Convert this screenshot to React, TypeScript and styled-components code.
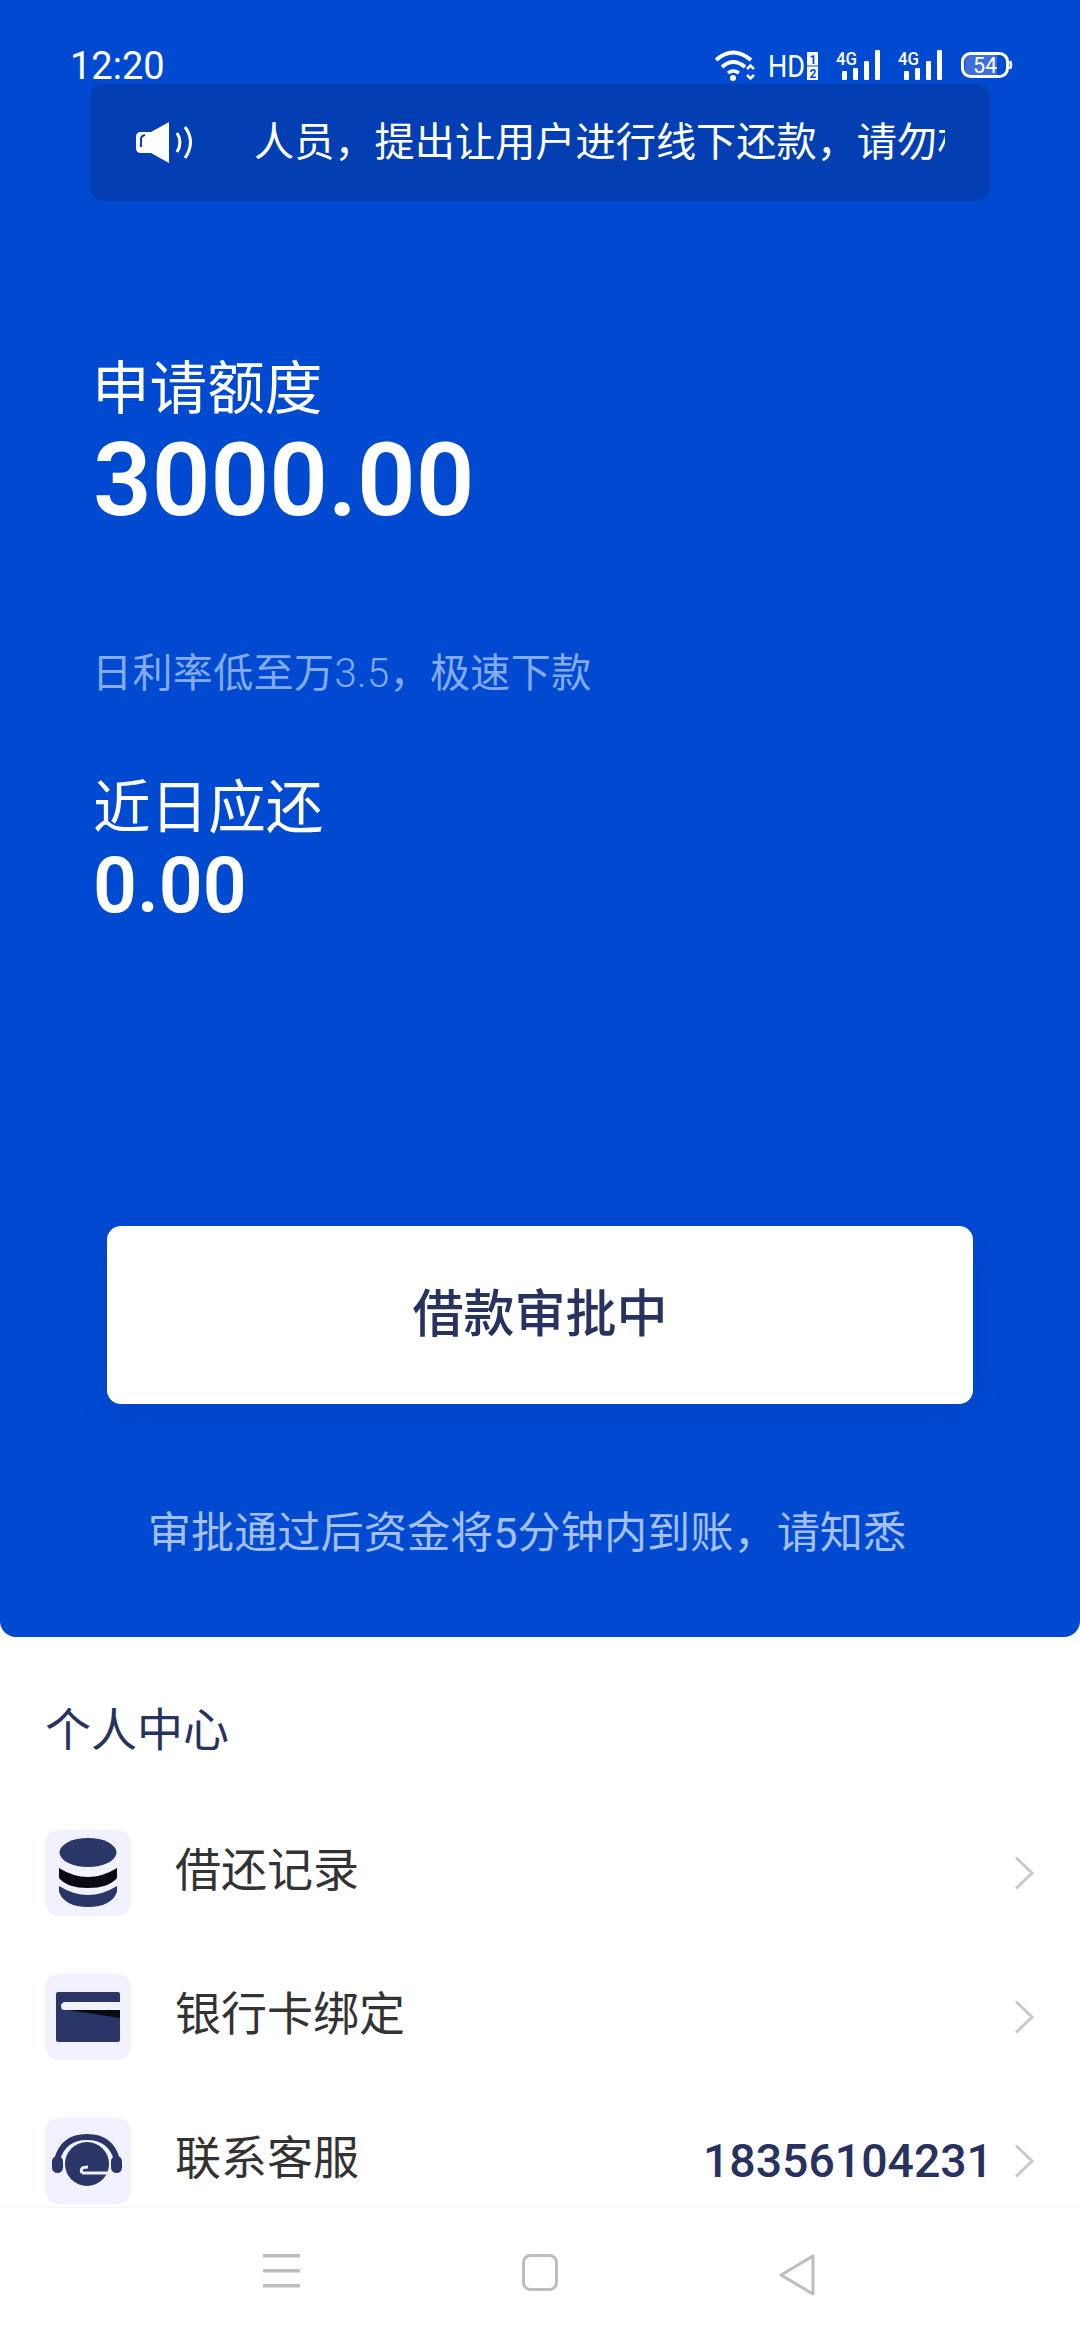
import React from "react";
import styled, { createGlobalStyle } from "styled-components";

const Global = createGlobalStyle`
  html, body { margin: 0; padding: 0; background: #fff; }
  * { box-sizing: border-box; }
  body { font-family: Roboto, "Noto Sans CJK SC", sans-serif; }
`;
const CJK = `Roboto, "Noto Sans CJK SC", sans-serif`;
const NAVY = "#28325f";

const Page = styled.div`
  width: 1080px; height: 2340px; display: flex; flex-direction: column;
  background: #fff; overflow: hidden; font-family: ${CJK};
`;
const Hero = styled.section`
  height: 1637px; flex: none; background: #004ad2; color: #fff;
  border-radius: 0 0 16px 16px; display: flex; flex-direction: column;
`;
const StatusBar = styled.div`
  height: 84px; flex: none; padding: 48px 65px 0 70px; display: flex;
  justify-content: space-between; align-items: center;
`;
const Clock = styled.span`font-size: 38px; line-height: 36px; font-weight: 400;`;
const StatusIcons = styled.svg`display: block;`;
const Notice = styled.div`
  flex: none; height: 117px; margin: 0 90px; padding: 0 45px 0 46px; border-radius: 14px;
  background: #033fb2; display: flex; align-items: center; gap: 58px;
`;
const Marquee = styled.div`
  width: 691px; overflow: hidden; white-space: nowrap; font-size: 40.2px; line-height: 56px;
`;
const Amounts = styled.div`padding: 155px 0 0 93px; display: flex; flex-direction: column;`;
const Label = styled.div`font-size: 57.6px; line-height: 68px; margin-left: -1px;`;
const BigValue = styled.div`font-size: 102.8px; line-height: 112px; font-weight: 600;`;
const Hint = styled.div`
  font-size: 40px; line-height: 56px; color: #84aaf0; margin: 110px 0 0 -1px;
  letter-spacing: 0.4px;
`;
const HintNumber = styled.span`font-weight: 300;`;
const SecondLabel = styled(Label)`margin: 73px 0 0 0;`;
const SmallValue = styled.div`font-size: 77px; line-height: 84px; font-weight: 600; margin-top: 1px;`;
const ActionButton = styled.button`
  flex: none; width: 866px; height: 178px; margin: 298px 0 0 107px; border: 0; border-radius: 14px;
  background: #fff; color: ${NAVY}; font: 500 51px/60px ${CJK};
  box-shadow: 0 12px 40px rgba(3, 50, 160, 0.2);
`;
const Footnote = styled.div`
  margin-top: 100px; padding-right: 26px; text-align: center; font-size: 43.2px; line-height: 60px; color: #a3bff5;
`;
const Center = styled.section`flex: 1; padding: 62px 0 0 45px; display: flex; flex-direction: column;`;
const CenterTitle = styled.h2`
  margin: 0 0 69px; font-size: 46px; line-height: 62px; font-weight: 400; color: ${NAVY};
`;
const Rows = styled.div`display: flex; flex-direction: column; gap: 58px; padding-right: 46px;`;
const Row = styled.div`height: 86px; display: flex; align-items: center;`;
const Tile = styled.div`
  width: 86px; height: 86px; border-radius: 14px; background: #f1f2fd; flex: none;
  display: flex; align-items: center; justify-content: center;
`;
const RowLabel = styled.div`
  margin: -6px 0 0 44px; flex: 1; font-size: 46px; line-height: 60px; color: #333;
`;
const Phone = styled.div`font-size: 46.4px; line-height: 60px; font-weight: 500; color: ${NAVY}; margin-right: 21px;`;
const Divider = styled.div`height: 1px; background: #f7f7f7; flex: none;`;
const NavBar = styled.nav`
  height: 132px; flex: none; display: flex; justify-content: center; align-items: flex-start;
  padding-top: 46px; gap: 221px;
`;

const Speaker = () => (
  <svg width="60" height="42" viewBox="0 0 60 42" fill="none">
    <path d="M5 10 H15 L33 0 V41 L15 31 H5 Q0 31 0 26 V15 Q0 10 5 10Z" fill="#fff" />
    <path d="M5 25 V17 Q5 14 9 13" stroke="#033fb2" strokeWidth="2" />
    <path d="M41 11 Q47 20 41 30" stroke="#fff" strokeWidth="3" />
    <path d="M49 5 Q60 20 49 36" stroke="#fff" strokeWidth="3" />
  </svg>
);

const Signal = ({ x }: { x: number }) => (
  <g transform={`translate(${x} 0)`}>
    <text x="0" y="16" fontSize="18" fontWeight="500" fill="#fff" fontFamily="Roboto, sans-serif" textLength="21" lengthAdjust="spacingAndGlyphs">4G</text>
    <rect x="6" y="22" width="5" height="9" rx="1" fill="#fff" />
    <rect x="17" y="19" width="5" height="12" rx="1" fill="#fff" />
    <rect x="28" y="12" width="5" height="19" rx="1" fill="#fff" />
    <rect x="39" y="1" width="5" height="30" rx="1" fill="#fff" />
  </g>
);

const StatusGlyphs = () => (
  <StatusIcons width="300" height="34" viewBox="0 0 300 34" fill="none">
    <path d="M1 11 Q18 -4 36 11" stroke="#fff" strokeWidth="4" />
    <path d="M7 18 Q18 8 30 18" stroke="#fff" strokeWidth="4" />
    <path d="M13 24 Q18 20 24 24" stroke="#fff" strokeWidth="3.5" />
    <circle cx="18" cy="29" r="3" fill="#fff" />
    <path d="M32 20 L35.5 16.5 L39 20 M32 26 L35.5 29.5 L39 26" stroke="#fff" strokeWidth="2.5" />
    <text x="53" y="28" fontSize="32" fontWeight="400" fill="#fff" fontFamily="Roboto, sans-serif" textLength="37" lengthAdjust="spacingAndGlyphs">HD</text>
    <rect x="92" y="3" width="11" height="13.5" fill="#fff" />
    <rect x="92" y="17.5" width="11" height="13.5" fill="#fff" />
    <text x="94.5" y="14.5" fontSize="12" fontWeight="700" fill="#004ad2" fontFamily="Roboto, sans-serif">1</text>
    <text x="94.5" y="29" fontSize="12" fontWeight="700" fill="#004ad2" fontFamily="Roboto, sans-serif">2</text>
    <Signal x={121} />
    <Signal x={183} />
    <path d="M250 11 Q250 6 255 6 H282 V26 H255 Q250 26 250 21Z" fill="#3f6fd8" />
    <rect x="247.5" y="4.5" width="45" height="23" rx="8" stroke="#fff" strokeWidth="3" />
    <path d="M295 12 Q297 16 295 20" stroke="#fff" strokeWidth="2.5" />
    <text x="258" y="23.5" fontSize="21.5" fontWeight="400" fill="#fff" fontFamily="Roboto, sans-serif">54</text>
  </StatusIcons>
);

const Coins = () => (
  <svg width="58" height="70" viewBox="0 0 58 70">
    <ellipse cx="29" cy="14.5" rx="28.5" ry="14.5" fill="#2a3568" />
    <path d="M0 30 Q29 48 58 30 V40 Q50 50 29 50 Q8 50 0 40Z" fill="#0a0a12" />
    <path d="M0 48 Q29 66 58 48 V54 Q52 69 29 69 Q6 69 0 54Z" fill="#2a3568" />
  </svg>
);
const Card = () => (
  <svg width="64" height="50" viewBox="0 0 64 50">
    <rect width="64" height="50" rx="2" fill="#2a3568" />
    <path d="M5 14 Q5 10 10 10 H64 V18 H8 Q5 18 5 14Z" fill="#f1f2fd" />
    <path d="M12 18 H64 V26Z" fill="#0a0a12" />
  </svg>
);
const Headset = () => (
  <svg width="72" height="54" viewBox="0 0 72 54" fill="none">
    <path d="M5 26 Q11 3 35 3 Q59 3 65 26" stroke="#2a3568" strokeWidth="6" />
    <rect x="0" y="22" width="11" height="17" rx="5.5" fill="#2a3568" />
    <rect x="59" y="22" width="11" height="17" rx="5.5" fill="#2a3568" />
    <circle cx="35" cy="30" r="22" fill="#2a3568" />
    <path d="M30 39 H56" stroke="#f1f2fd" strokeWidth="3" />
    <path d="M30 39 Q27 33 36 33" stroke="#f1f2fd" strokeWidth="3" />
  </svg>
);
const Chevron = () => (
  <svg width="20" height="34" viewBox="0 0 20 34" fill="none">
    <path d="M2 1.5 L18 17 L2 32.5" stroke="#c9c9c9" strokeWidth="3" />
  </svg>
);
const Menu = () => (
  <svg width="38" height="36" viewBox="0 0 38 36" fill="#bdbdbd">
    <rect x="0" y="0" width="37" height="3.5" />
    <rect x="0" y="15" width="37" height="3.5" />
    <rect x="0" y="30" width="37" height="3.5" />
  </svg>
);
const Home = () => (
  <svg width="36" height="37" viewBox="0 0 36 37" fill="none">
    <rect x="1.5" y="1.5" width="33" height="34" rx="7" stroke="#bdbdbd" strokeWidth="3" />
  </svg>
);
const Back = () => (
  <svg width="38" height="42" viewBox="0 0 38 42" fill="none">
    <path d="M34 2 L2 21 L34 40Z" stroke="#bdbdbd" strokeWidth="3" strokeLinejoin="round" />
  </svg>
);

export default function App() {
  return (
    <Page>
      <Global />
      <Hero>
        <StatusBar>
          <Clock>12:20</Clock>
          <StatusGlyphs />
        </StatusBar>
        <Notice>
          <Speaker />
          <Marquee>人员，提出让用户进行线下还款，请勿相信</Marquee>
        </Notice>
        <Amounts>
          <Label>申请额度</Label>
          <BigValue>3000.00</BigValue>
          <Hint>日利率低至万<HintNumber>3.5</HintNumber>，极速下款</Hint>
          <SecondLabel>近日应还</SecondLabel>
          <SmallValue>0.00</SmallValue>
        </Amounts>
        <ActionButton>借款审批中</ActionButton>
        <Footnote>审批通过后资金将5分钟内到账，请知悉</Footnote>
      </Hero>
      <Center>
        <CenterTitle>个人中心</CenterTitle>
        <Rows>
          <Row><Tile><Coins /></Tile><RowLabel>借还记录</RowLabel><Chevron /></Row>
          <Row><Tile><Card /></Tile><RowLabel>银行卡绑定</RowLabel><Chevron /></Row>
          <Row><Tile><Headset /></Tile><RowLabel>联系客服</RowLabel><Phone>18356104231</Phone><Chevron /></Row>
        </Rows>
      </Center>
      <Divider />
      <NavBar>
        <Menu />
        <Home />
        <Back />
      </NavBar>
    </Page>
  );
}
